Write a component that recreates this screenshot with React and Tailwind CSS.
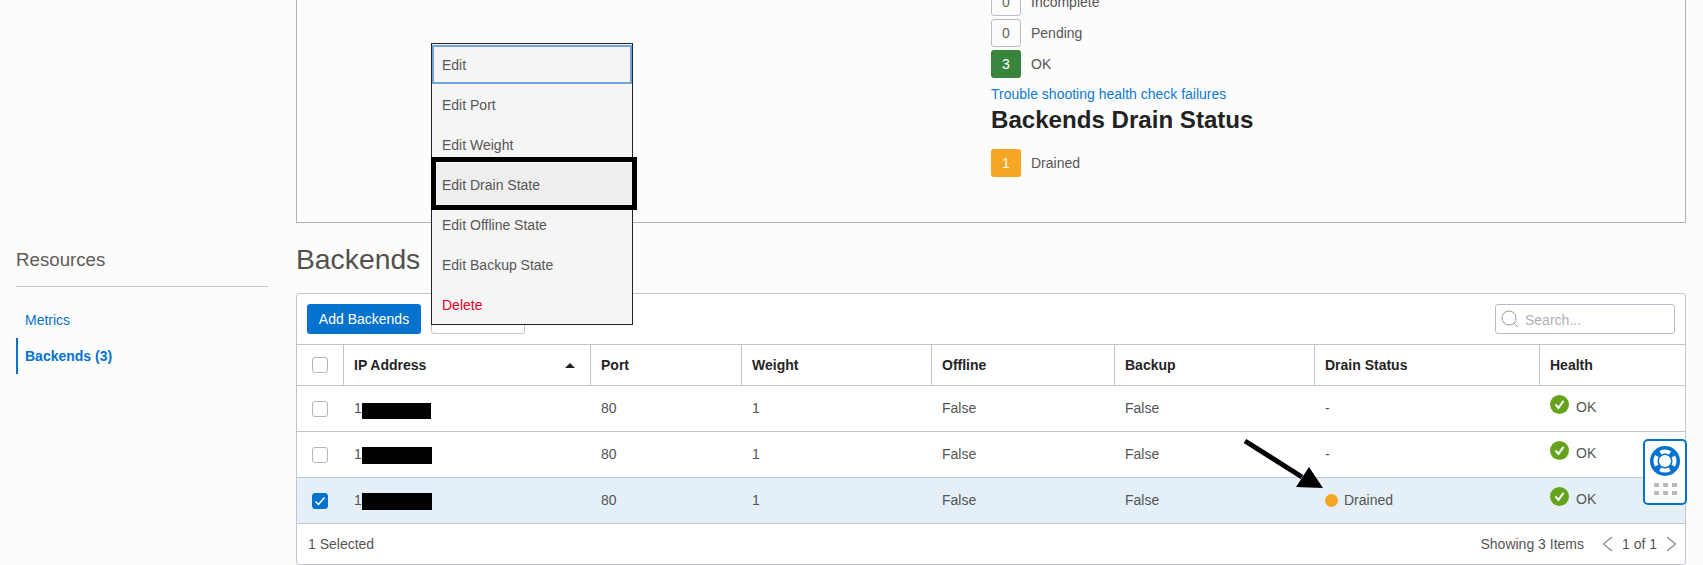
import React from "react";

const font = { fontFamily: '"Liberation Sans", Arial, sans-serif' };
const cols = "grid grid-cols-[46px_247px_151px_190px_183px_200px_225px_1fr]";

function Stat({ n, label, cls = "border border-[#b8bcc8] text-[#666]" }) {
  return (
    <div className="flex items-center h-[28px] mb-[3px]">
      <div className={`w-[30px] h-[28px] rounded-[3px] flex items-center justify-center text-[14px] ${cls}`}>{n}</div>
      <span className="ml-[10px] text-[14px] text-[#555]">{label}</span>
    </div>
  );
}

function Box({ checked }) {
  return (
    <div className={`w-[16px] h-[16px] rounded-[3px] flex items-center justify-center border ${checked ? "bg-[#0572ce] border-[#0572ce]" : "bg-white border-[#b5b5b5]"}`}>
      {checked && (
        <svg width="12" height="12" viewBox="0 0 12 12" fill="none" stroke="white" strokeWidth="1.5">
          <path d="M1.5 6.5 L4.5 9.5 L10.5 2.5" />
        </svg>
      )}
    </div>
  );
}

function OkIcon() {
  return (
    <svg width="19" height="19" viewBox="0 0 19 19">
      <circle cx="9.5" cy="9.5" r="9.5" fill="#65a31d" />
      <path d="M5.5 9.5 L8.5 12.8 L13.5 5.8" fill="none" stroke="white" strokeWidth="2" />
    </svg>
  );
}

function Head({ children, sort }) {
  return (
    <div className="flex items-center h-[40px] font-bold text-[14px] text-[#252525] px-[10px] border-l border-[#c2c5cf]">
      <span>{children}</span>
      {sort && (
        <svg className="ml-auto mr-[5px]" width="10" height="5" viewBox="0 0 10 5"><path d="M5 0 L10 5 L0 5 Z" fill="#222" /></svg>
      )}
    </div>
  );
}

function Cell({ children }) {
  return <div className="flex items-center pl-[11px] pr-[10px]">{children}</div>;
}

function Row({ checked, redactW, redactH, redactTop, drained }) {
  return (
    <div className={`${cols} h-[46px] border-b border-[#c2c5cf] text-[14px] text-[#555] ${checked ? "bg-[#e4eff8]" : ""}`}>
      <div className="flex items-center justify-center"><Box checked={checked} /></div>
      <Cell>
        <span className="relative w-full">
          10
          <span className={`absolute left-[8px] bg-black ${redactW} ${redactH} ${redactTop}`} />
        </span>
      </Cell>
      <Cell>80</Cell>
      <Cell>1</Cell>
      <Cell>False</Cell>
      <Cell>False</Cell>
      <Cell>
        {drained ? (
          <span className="flex items-center">
            <span className="w-[13px] h-[13px] rounded-full bg-[#f5a623] mr-[6px]" />
            Drained
          </span>
        ) : (
          "-"
        )}
      </Cell>
      <Cell>
        <span className="-mt-[8px] mr-[7px] flex"><OkIcon /></span>
        <span className="-mt-[3px]">OK</span>
      </Cell>
    </div>
  );
}

function MenuItem({ children, className = "pl-[10px] h-[40px]" }) {
  return <div className={`flex items-center pt-[2px] text-[14px] text-[#555] ${className}`}>{children}</div>;
}

export default function App() {
  return (
    <div style={font} className="relative w-[1703px] h-[565px] overflow-hidden bg-[#fcfcfc] flex">
      <aside className="w-[296px] shrink-0 pl-[16px] pt-[246px]">
        <div className="w-[252px]">
          <div className="text-[18.7px] leading-[28px] text-[#5f5b57] h-[41px] border-b border-[#c2c5cf]">Resources</div>
          <div className="mt-[15px] pl-[9px] h-[36px] flex items-center text-[14px] text-[#0572ce]">Metrics</div>
          <div className="pl-[7px] h-[36px] flex items-center text-[14px] font-bold text-[#0572ce] border-l-2 border-[#0572ce]">Backends (3)</div>
        </div>
      </aside>

      <main className="w-[1390px] shrink-0">
        <section className="h-[223px] border-l border-r border-b border-[#b3b3b3] pl-[694px] overflow-hidden">
          <div className="-mt-[12px]">
            <Stat n="0" label="Incomplete" />
            <Stat n="0" label="Pending" />
            <Stat n="3" label="OK" cls="bg-[#3a853d] text-white" />
          </div>
          <div className="text-[14px] leading-[16px] text-[#0f7ad2] mt-[8px]">Trouble shooting health check failures</div>
          <div className="text-[24.1px] leading-[26px] font-bold text-[#222] mt-[5px]">Backends Drain Status</div>
          <div className="mt-[16px]">
            <Stat n="1" label="Drained" cls="bg-[#f5a623] text-white" />
          </div>
        </section>

        <h2 className="text-[28.3px] leading-[32px] font-normal text-[#54504c] mt-[20px] mb-[18px]">Backends</h2>

        <section className="h-[272px] border border-[#c2c5cf] rounded-[3px] bg-white">
          <div className="h-[50px] flex items-start pt-[10px] pl-[10px] pr-[10px]">
            <button className="w-[114px] h-[30px] rounded-[3px] bg-[#0572ce] text-white text-[14px]">Add Backends</button>
            <button className="ml-[10px] w-[94px] h-[30px] rounded-[3px] border border-[#c2c5cf] bg-white text-[14px] text-[#555]">Actions</button>
            <div className="ml-auto w-[180px] h-[30px] rounded-[3px] border border-[#b8bcc8] flex items-center pl-[5px]">
              <svg width="18" height="18" viewBox="0 0 18 18" fill="none" stroke="#999" strokeWidth="1">
                <circle cx="8" cy="8" r="7" />
                <path d="M13 13 L17 17" />
              </svg>
              <span className="ml-[6px] pt-[2px] text-[14px] text-[#b0b0b0]">Search...</span>
            </div>
          </div>

          <div className={`${cols} h-[42px] border-t border-b border-[#c2c5cf]`}>
            <div className="flex items-center justify-center"><Box /></div>
            <Head sort>IP Address</Head>
            <Head>Port</Head>
            <Head>Weight</Head>
            <Head>Offline</Head>
            <Head>Backup</Head>
            <Head>Drain Status</Head>
            <Head>Health</Head>
          </div>

          <Row redactW="w-[69px]" redactH="h-[16px]" redactTop="top-[5px]" />
          <Row redactW="w-[70px]" redactH="h-[17px]" redactTop="top-[3px]" />
          <Row checked drained redactW="w-[70px]" redactH="h-[17px]" redactTop="top-[3px]" />

          <div className="h-[40px] flex items-center pl-[11px] pr-[8px] text-[14px] text-[#555]">
            <span>1 Selected</span>
            <span className="ml-auto">Showing 3 Items</span>
            <svg className="ml-[18px]" width="11" height="16" viewBox="0 0 11 16" fill="none" stroke="#888" strokeWidth="1.2"><path d="M10 1 L1.5 8 L10 15" /></svg>
            <span className="ml-[9px]">1 of 1</span>
            <svg className="ml-[9px]" width="11" height="16" viewBox="0 0 11 16" fill="none" stroke="#888" strokeWidth="1.2"><path d="M1 1 L9.5 8 L1 15" /></svg>
          </div>
        </section>
      </main>

      {/* Dropdown menu */}
      <div className="absolute left-[431px] top-[43px] w-[202px] h-[282px] bg-[#f5f5f5] border border-[#222]">
        <MenuItem className="border-2 border-[#6fa3dc] pl-[8px] h-[39px] mt-[1px]">Edit</MenuItem>
        <MenuItem>Edit Port</MenuItem>
        <MenuItem>Edit Weight</MenuItem>
        <MenuItem className="pl-[10px] h-[40px] bg-[#eeeeee]">Edit Drain State</MenuItem>
        <MenuItem>Edit Offline State</MenuItem>
        <MenuItem>Edit Backup State</MenuItem>
        <MenuItem className="pl-[10px] h-[40px] !text-[#e4002b]">Delete</MenuItem>
        <div className="absolute -left-[1px] top-[113px] w-[206px] h-[53px] border-[5px] border-black" />
      </div>

      {/* Annotation arrow */}
      <svg className="absolute left-[1240px] top-[435px]" width="90" height="65" viewBox="0 0 90 65">
        <path d="M5 6 L62 42" stroke="black" strokeWidth="5" fill="none" />
        <path d="M83 53 L56 52 L69 32 Z" fill="black" />
      </svg>

      {/* Help widget */}
      <div className="absolute left-[1643px] top-[439px] w-[44px] h-[66px] rounded-[5px] border-2 border-[#0572ce] bg-white flex flex-col items-center">
        <svg className="mt-[5px]" width="30" height="30" viewBox="0 0 30 30">
          <circle cx="15" cy="15" r="15" fill="#0572ce" />
          <circle cx="15" cy="15" r="9.5" fill="none" stroke="white" strokeWidth="4" strokeDasharray="10 4.92" strokeDashoffset="5" />
          <circle cx="15" cy="15" r="6" fill="white" />
        </svg>
        <div className="mt-[7px] grid grid-cols-3 gap-x-[4px] gap-y-[4px]">
          {[0, 1, 2, 3, 4, 5].map((i) => (
            <span key={i} className="w-[5px] h-[4px] bg-[#b9b9b9]" />
          ))}
        </div>
      </div>
    </div>
  );
}
